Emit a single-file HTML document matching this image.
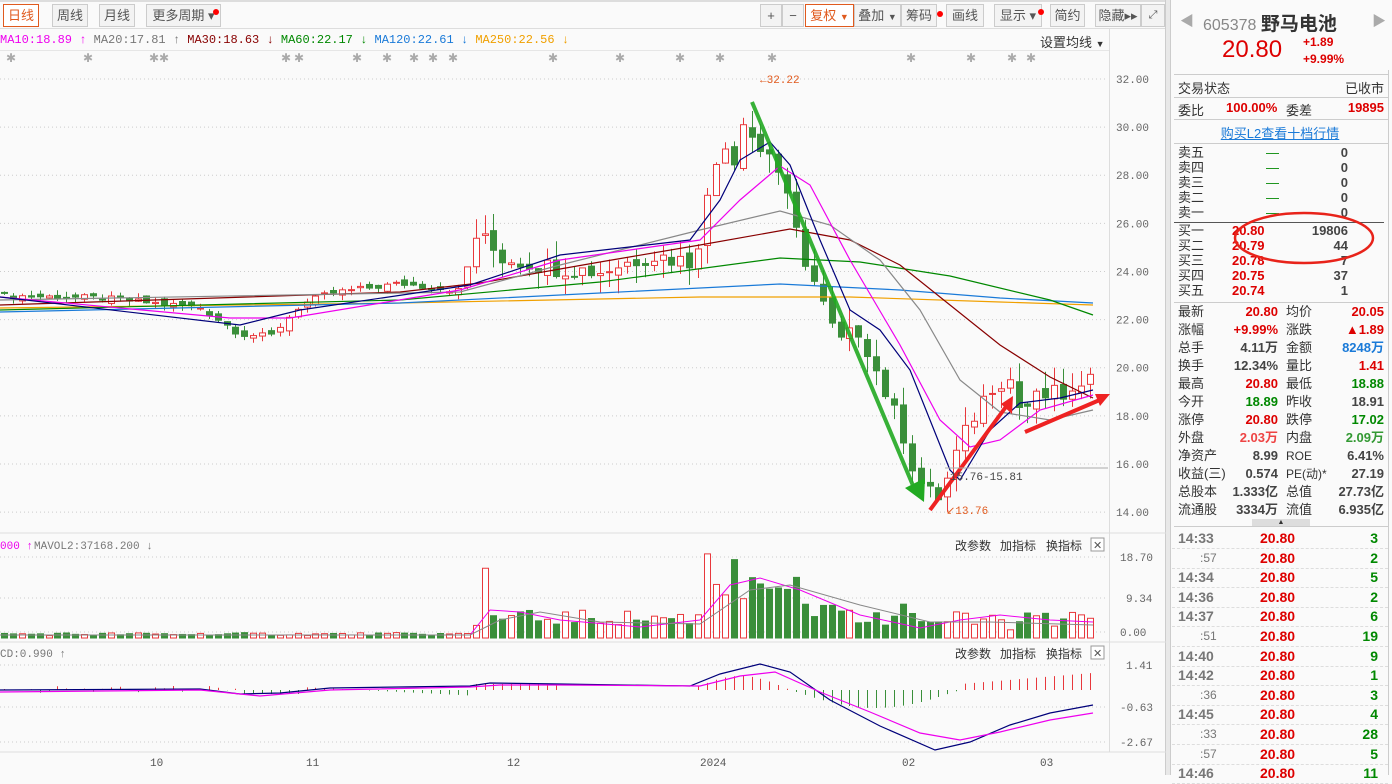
<!DOCTYPE html>
<html><head><meta charset="utf-8">
<style>
*{margin:0;padding:0;box-sizing:border-box}
body{width:1392px;height:775px;overflow:hidden;background:#fafafa;font-family:"Liberation Sans","Noto Sans CJK SC",sans-serif;position:relative;color:#333}
.abs{position:absolute}
.tab{position:absolute;top:4px;height:23px;border:1px solid #ccc;background:#f3f3f3;font-size:13px;color:#555;text-align:center;line-height:21px}
.dot{position:absolute;width:6px;height:6px;border-radius:3px;background:#f00}
.mono{font-family:"Liberation Mono","Noto Sans CJK SC",monospace}
.rp{position:absolute;left:1172px;width:216px;font-size:13px}
.row{position:absolute;left:0;width:216px;height:16px;line-height:16px}
.row span{position:absolute}
.r{color:#d00;font-weight:bold}.g{color:#080;font-weight:bold}.k{color:#444;font-weight:bold}
</style></head><body>
<!-- toolbar -->
<div class="abs" style="left:0;top:0;width:1166px;height:2px;background:#ddd"></div>
<div class="tab" style="left:3px;width:36px;border-color:#e05a1e;color:#e05a1e;background:#fff">日线</div>
<div class="tab" style="left:52px;width:36px">周线</div>
<div class="tab" style="left:99px;width:36px">月线</div>
<div class="tab" style="left:146px;width:75px">更多周期 ▾</div><div class="dot" style="left:213px;top:9px"></div>
<div class="tab" style="left:760px;width:22px">+</div>
<div class="tab" style="left:782px;width:22px">−</div>
<div class="tab" style="left:805px;width:49px;border-color:#e05a1e;color:#e05a1e;background:#fff">复权 <span style="font-size:9px">▼</span></div>
<div class="tab" style="left:854px;width:47px">叠加 <span style="font-size:9px">▼</span></div>
<div class="tab" style="left:901px;width:36px">筹码</div><div class="dot" style="left:937px;top:11px"></div>
<div class="tab" style="left:946px;width:38px">画线</div>
<div class="tab" style="left:994px;width:48px">显示 ▾</div><div class="dot" style="left:1038px;top:9px"></div>
<div class="tab" style="left:1050px;width:35px">简约</div>
<div class="tab" style="left:1095px;width:46px">隐藏▸▸</div>
<div class="tab" style="left:1141px;width:24px;font-size:11px">⤢</div>
<div class="abs" style="left:0;top:28px;width:1166px;height:1px;background:#ddd"></div>
<div class="abs mono" style="left:0;top:33px;font-size:12px;white-space:nowrap">
<span style="color:#e0e">MA10:18.89 ↑</span> <span style="color:#777">MA20:17.81 ↑</span> <span style="color:#800">MA30:18.63 ↓</span> <span style="color:#080">MA60:22.17 ↓</span> <span style="color:#1a7ad8">MA120:22.61 ↓</span> <span style="color:#f0a000">MA250:22.56 ↓</span></div>
<div class="abs" style="left:1040px;top:32px;font-size:13px">设置均线 <span style="font-size:9px">▼</span></div>
<div class="abs" style="left:0;top:50px;width:1110px;height:1px;background:#e6e6e6"></div>
<div class="abs" style="left:1109px;top:29px;width:1px;height:723px;background:#ddd"></div>
<div class="abs" style="left:1165px;top:0;width:6px;height:775px;background:#e8e8e8;border-left:1px solid #ccc;border-right:1px solid #ccc"></div>

<svg class="abs" style="left:0;top:0" width="1166" height="775" id="ch">
<g id="grid" stroke="#ccc" stroke-dasharray="1,3">
</g>
<g font-family="Liberation Mono" font-size="11" fill="#666" id="axis"></g>
<g id="stars" fill="#aaa" font-size="12" font-family="DejaVu Sans"></g>
<g id="candles"></g>
<g fill="none" stroke-width="1.2">
<path stroke="#f0a000" d="M0,308 L400,303 L700,297 L850,297 L1000,302 L1093,305"/>
<path stroke="#1a7ad8" d="M0,312 L400,303 L600,293 L780,284 L900,290 L1000,298 L1093,303"/>
<path stroke="#080" d="M0,310 L400,300 L600,282 L780,258 L860,262 L950,276 L1050,300 L1093,315"/>
<path stroke="#800" d="M0,305 L400,292 L480,283 L600,262 L700,245 L790,229 L850,240 L900,265 L950,305 L1000,345 L1050,377 L1093,398"/>
<path stroke="#888" d="M0,300 L460,292 L560,265 L700,230 L780,211 L830,225 L880,260 L920,310 L960,380 L1000,412 L1050,420 L1093,410"/>
<path stroke="#e0e" d="M0,297 L230,318 L290,318 L460,290 L560,260 L700,240 L740,200 L780,166 L810,185 L850,260 L900,345 L940,420 L970,447 L1000,440 L1040,410 L1093,395"/>
<path stroke="#00007a" d="M0,297 L240,325 L300,310 L470,285 L560,255 L690,240 L720,200 L740,160 L770,142 L790,165 L820,240 L850,310 L880,330 L910,370 L930,420 L950,470 L960,480 L990,430 L1020,403 L1060,398 L1093,390"/>
</g>
<!-- arrows -->
<path d="M752,102 L914,488" stroke="#22aa22" stroke-width="4" opacity=".9"/>
<polygon points="905,488 924,502 925,478" fill="#22aa22"/>
<path d="M930,510 L1008,404" stroke="#ee2222" stroke-width="4"/>
<polygon points="1001,404 1013,396 1012,414" fill="#ee2222"/>
<path d="M1025,432 L1102,399" stroke="#ee2222" stroke-width="4"/>
<polygon points="1095,394 1110,394 1100,406" fill="#ee2222"/>
<text x="760" y="83" fill="#e05a1e" font-family="Liberation Mono" font-size="11">←32.22</text>
<text x="946" y="514" fill="#e05a1e" font-family="Liberation Mono" font-size="11">↙13.76</text>
<line x1="945" y1="468" x2="1108" y2="468" stroke="#aaa"/>
<text x="950" y="480" fill="#444" font-family="Liberation Mono" font-size="11">15.76-15.81</text>
<!-- volume panel -->
<line x1="0" y1="533" x2="1166" y2="533" stroke="#ddd"/>
<text x="0" y="549" font-family="Liberation Mono" font-size="11" fill="#e0e">000 ↑</text>
<text x="34" y="549" font-family="Liberation Mono" font-size="11" fill="#777">MAVOL2:37168.200 ↓</text>
<g id="vol"></g>
<path fill="none" stroke="#e0e" d="M0,635 L470,635 L490,610 L520,612 L560,620 L640,627 L700,620 L730,585 L760,578 L800,590 L860,615 L920,628 L960,620 L1000,615 L1050,620 L1093,622"/>
<path fill="none" stroke="#888" d="M0,635 L470,635 L500,620 L540,612 L600,622 L700,624 L750,590 L790,585 L860,605 L930,622 L990,622 L1093,625"/>
<line x1="0" y1="642" x2="1166" y2="642" stroke="#ddd"/>
<text x="0" y="657" font-family="Liberation Mono" font-size="11" fill="#777">CD:0.990 ↑</text>
<g id="macd"></g>
<path fill="none" stroke="#00007a" stroke-width="1.2" d="M0,690 L200,689 L240,694 L280,693 L330,688 L470,686 L490,683 L560,684 L690,686 L720,674 L760,664 L790,672 L830,700 L880,726 L935,750 L970,742 L1010,725 L1050,713 L1093,705"/>
<path fill="none" stroke="#e0e" stroke-width="1.2" d="M0,692 L200,690 L260,696 L330,690 L470,687 L500,685 L560,685 L700,686 L740,676 L775,672 L820,692 L870,712 L920,733 L960,740 L1000,732 L1050,720 L1093,713"/>
<line x1="0" y1="752" x2="1166" y2="752" stroke="#ddd"/>
<g font-family="Liberation Mono" font-size="11" fill="#555">
<text x="150" y="766">10</text><text x="306" y="766">11</text><text x="507" y="766">12</text><text x="700" y="766">2024</text><text x="902" y="766">02</text><text x="1040" y="766">03</text>
</g>
<g font-size="12" fill="#333">
<text x="955" y="550">改参数</text><text x="1000" y="550">加指标</text><text x="1046" y="550">换指标</text>
<text x="955" y="658">改参数</text><text x="1000" y="658">加指标</text><text x="1046" y="658">换指标</text>
</g>
<rect x="1091" y="538" width="13" height="13" fill="#fff" stroke="#999"/><text x="1093" y="549" font-size="11" fill="#555">✕</text>
<rect x="1091" y="646" width="13" height="13" fill="#fff" stroke="#999"/><text x="1093" y="657" font-size="11" fill="#555">✕</text>
<g font-family="Liberation Mono" font-size="11" fill="#666">
<text x="1120" y="561">18.70</text><text x="1126" y="602">9.34</text><text x="1120" y="636">0.00</text>
<text x="1126" y="669">1.41</text><text x="1120" y="711">-0.63</text><text x="1120" y="746">-2.67</text>
</g>
</svg>

<!-- right panel -->
<div class="abs" style="left:1172px;top:0;width:220px;height:775px;background:#fafafa"></div>
<div class="abs" style="left:1180px;top:11px;color:#aaa;font-size:14px">◀</div>
<div class="abs" style="left:1372px;top:11px;color:#aaa;font-size:14px">▶</div>
<div class="abs" style="left:1203px;top:9px;font-size:16px;color:#888">605378 <b style="color:#333;font-size:19px">野马电池</b></div>
<div class="abs" style="left:1222px;top:36px;font-size:24px;color:#d00">20.80</div>
<div class="abs r" style="left:1303px;top:35px;font-size:12px">+1.89</div>
<div class="abs r" style="left:1303px;top:52px;font-size:12px">+9.99%</div>
<div class="abs" style="left:1174px;top:74px;width:214px;height:1px;background:#ccc"></div>
<div class="rp" style="top:78px"><span style="position:absolute;left:6px">交易状态</span><span style="position:absolute;right:4px">已收市</span></div>
<div class="abs" style="left:1174px;top:97px;width:214px;height:1px;background:#ccc"></div>
<div class="rp" style="top:100px"><span style="position:absolute;left:6px">委比</span><span class="r" style="position:absolute;left:54px">100.00%</span><span style="position:absolute;left:114px">委差</span><span class="r" style="position:absolute;right:4px">19895</span></div>
<div class="abs" style="left:1174px;top:119px;width:214px;height:1px;background:#ccc"></div>
<div class="rp" style="top:123px;text-align:center;color:#1a7ad8;text-decoration:underline">购买L2查看十档行情</div>
<div class="abs" style="left:1174px;top:143px;width:214px;height:1px;background:#ccc"></div>
<div class="rp" style="top:145px;font-size:13px;line-height:15px">
<div class="row" style="top:0"><span style="left:6px">卖五</span><span style="left:94px;color:#080">—</span><span class="k" style="right:40px">0</span></div>
<div class="row" style="top:15px"><span style="left:6px">卖四</span><span style="left:94px;color:#080">—</span><span class="k" style="right:40px">0</span></div>
<div class="row" style="top:30px"><span style="left:6px">卖三</span><span style="left:94px;color:#080">—</span><span class="k" style="right:40px">0</span></div>
<div class="row" style="top:45px"><span style="left:6px">卖二</span><span style="left:94px;color:#080">—</span><span class="k" style="right:40px">0</span></div>
<div class="row" style="top:60px"><span style="left:6px">卖一</span><span style="left:94px;color:#080">—</span><span class="k" style="right:40px">0</span></div>
</div>
<div class="abs" style="left:1174px;top:222px;width:210px;height:1px;background:#555"></div>
<div class="rp" style="top:223px">
<div class="row" style="top:0"><span style="left:6px">买一</span><span class="r" style="left:60px">20.80</span><span class="k" style="right:40px">19806</span></div>
<div class="row" style="top:15px"><span style="left:6px">买二</span><span class="r" style="left:60px">20.79</span><span class="k" style="right:40px">44</span></div>
<div class="row" style="top:30px"><span style="left:6px">买三</span><span class="r" style="left:60px">20.78</span><span class="k" style="right:40px">7</span></div>
<div class="row" style="top:45px"><span style="left:6px">买四</span><span class="r" style="left:60px">20.75</span><span class="k" style="right:40px">37</span></div>
<div class="row" style="top:60px"><span style="left:6px">买五</span><span class="r" style="left:60px">20.74</span><span class="k" style="right:40px">1</span></div>
</div>
<svg class="abs" style="left:1232px;top:210px" width="145" height="56"><ellipse cx="72" cy="28" rx="69" ry="25" fill="none" stroke="#e8231a" stroke-width="2.5"/></svg>
<div class="abs" style="left:1174px;top:302px;width:214px;height:1px;background:#ccc"></div>
<div class="rp" style="top:304px;font-size:13px">
<div class="row" style="top:0"><span style="left:6px">最新</span><span class="r" style="right:110px">20.80</span><span style="left:114px">均价</span><span class="r" style="right:4px">20.05</span></div>
<div class="row" style="top:18px"><span style="left:6px">涨幅</span><span class="r" style="right:110px">+9.99%</span><span style="left:114px">涨跌</span><span class="r" style="right:4px">▲1.89</span></div>
<div class="row" style="top:36px"><span style="left:6px">总手</span><span class="k" style="right:110px">4.11万</span><span style="left:114px">金额</span><span style="right:4px;color:#1a7ad8;font-weight:bold">8248万</span></div>
<div class="row" style="top:54px"><span style="left:6px">换手</span><span class="k" style="right:110px">12.34%</span><span style="left:114px">量比</span><span class="r" style="right:4px">1.41</span></div>
<div class="row" style="top:72px"><span style="left:6px">最高</span><span class="r" style="right:110px">20.80</span><span style="left:114px">最低</span><span class="g" style="right:4px">18.88</span></div>
<div class="row" style="top:90px"><span style="left:6px">今开</span><span class="g" style="right:110px">18.89</span><span style="left:114px">昨收</span><span class="k" style="right:4px">18.91</span></div>
<div class="row" style="top:108px"><span style="left:6px">涨停</span><span class="r" style="right:110px">20.80</span><span style="left:114px">跌停</span><span class="g" style="right:4px">17.02</span></div>
<div class="row" style="top:126px"><span style="left:6px">外盘</span><span style="right:110px;color:#e44;font-weight:bold">2.03万</span><span style="left:114px">内盘</span><span style="right:4px;color:#393;font-weight:bold">2.09万</span></div>
<div class="row" style="top:144px"><span style="left:6px">净资产</span><span class="k" style="right:110px">8.99</span><span style="left:114px;font-size:12px">ROE</span><span class="k" style="right:4px">6.41%</span></div>
<div class="row" style="top:162px"><span style="left:6px">收益(三)</span><span class="k" style="right:110px">0.574</span><span style="left:114px;font-size:12px">PE(动)*</span><span class="k" style="right:4px">27.19</span></div>
<div class="row" style="top:180px"><span style="left:6px">总股本</span><span class="k" style="right:110px">1.333亿</span><span style="left:114px">总值</span><span class="k" style="right:4px">27.73亿</span></div>
<div class="row" style="top:198px"><span style="left:6px">流通股</span><span class="k" style="right:110px">3334万</span><span style="left:114px">流值</span><span class="k" style="right:4px">6.935亿</span></div>
</div>
<div class="abs" style="left:1252px;top:519px;width:58px;height:7px;background:#ddd;font-size:7px;text-align:center;line-height:7px;color:#333">▲</div>
<div class="abs" style="left:1174px;top:526px;width:214px;height:1px;background:#ccc"></div>
<div class="abs" style="left:1388px;top:70px;width:1px;height:705px;background:#ccc"></div>
<div class="rp" id="ticks" style="top:528px;font-weight:bold;font-size:14px"></div>

<script>
var ch=document.getElementById('ch');
function Y(p){return 79+(32-p)*24.06}
var ns='http://www.w3.org/2000/svg';
function el(g,t,a,txt){var e=document.createElementNS(ns,t);for(var k in a)e.setAttribute(k,a[k]);if(txt)e.textContent=txt;document.getElementById(g).appendChild(e);return e}
var gp=[32,30,28,26,24,22,20,18,16,14];
gp.forEach(function(p){el('grid','line',{x1:0,x2:1108,y1:Y(p),y2:Y(p)});el('axis','text',{x:1116,y:Y(p)+4},p.toFixed(2))});
[557,598,632,665,707,742].forEach(function(y){el('grid','line',{x1:0,x2:1108,y1:y,y2:y})});
[10,87,153,163,285,298,356,386,413,432,452,552,619,679,771,719,910,970,1011,1030].forEach(function(x){el('stars','text',{x:x-4,y:62},'✱')});
var kp=[[0,23],[100,22.9],[200,22.5],[240,21.4],[270,21.3],[300,22.6],[330,23.1],[400,23.5],[460,23.2],[476,25.5],[487,25.2],[500,24.6],[550,24.2],[600,24],[650,24.7],[690,24.4],[700,25.5],[712,28],[724,29.5],[735,28.5],[745,31],[755,29],[770,29],[780,28],[790,26.5],[800,25],[810,24],[828,22],[838,21],[860,21.6],[875,20],[890,18.5],[905,17],[915,15.5],[928,14.8],[938,14.6],[948,15.4],[958,16.6],[968,17.5],[980,18.5],[995,19.5],[1010,19.5],[1020,18.2],[1040,18.8],[1060,18.9],[1075,18.8],[1085,18.9],[1093,20.8]];
function P(x){for(var i=1;i<kp.length;i++){if(x<=kp[i][0]){var a=kp[i-1],b=kp[i];return a[1]+(b[1]-a[1])*(x-a[0])/(b[0]-a[0])}}return 20.8}
var s=7,prev=P(0),i=0;
function rnd(n){var v=Math.sin(n*12.9898)*43758.5453;return v-Math.floor(v)}
var vols=[];
for(var x=4;x<=1093;x+=8.9){i++;
 var c=P(x)+(rnd(i)-0.5)*0.5*(x>470?1.6:0.5);
 if(x>1090)c=20.8;
 var o=prev+(rnd(i+100)-0.5)*0.3;
 if(x>1090)o=18.89;
 var up=c>=o;
 var hi=Math.max(o,c)+rnd(i+200)*0.4*(x>470?2:0.6),lo=Math.min(o,c)-rnd(i+300)*0.4*(x>470?2:0.6);
 var col=up?'#e8383c':'#3a8f3a';
 var xx=Math.round(x)+0.5;
 el('candles','line',{x1:xx,x2:xx,y1:Y(hi),y2:Y(lo),stroke:col});
 var t=Y(Math.max(o,c)),h=Math.max(1,Y(Math.min(o,c))-t);
 el('candles','rect',{x:xx-3,y:t,width:6,height:h,fill:up?'#fff':col,stroke:col});
 var v=x<470?(1.5+rnd(i+400)*2):(x<700?(8+rnd(i+500)*10):(x<800?(20+rnd(i+600)*35):(x<920?(8+rnd(i+700)*14):(5+rnd(i+800)*12))));
 if(Math.abs(x-487)<5)v=45;
 var vy=638-v*1.55;
 el('vol','rect',{x:xx-3,y:vy,width:6,height:638-vy,fill:up?'#fff':col,stroke:col});
 prev=c;
}
// macd histogram
for(var x=4;x<=1093;x+=8.9){
 var d=0;
 if(x>300&&x<470)d=-3+ (x-300)/20;
 if(x>470&&x<560)d=-6;
 if(x>690&&x<790)d=-14*Math.sin((x-690)/100*Math.PI);
 if(x>790&&x<960)d=18*Math.sin((x-790)/170*Math.PI);
 if(x>960)d=-6-(x-960)/12;
 if(x<260&&x>0)d=(rnd(x)-0.5)*8;
 if(x>240&&x<300)d=4;
 var xx=Math.round(x)+0.5;
 el('macd','line',{x1:xx,x2:xx,y1:690,y2:690+d,stroke:d<0?'#e8383c':'#3a8f3a'});
}
var tk=[["14:33",3],[":57",2],["14:34",5],["14:36",2],["14:37",6],[":51",19],["14:40",9],["14:42",1],[":36",3],["14:45",4],[":33",28],[":57",5],["14:46",11]];
var h='';tk.forEach(function(t,j){var y=j*19.6;var sub=t[0][0]==':';
h+='<div class="row" style="top:'+(y+2)+'px;height:19px;border-bottom:1px dashed #ddd"><span style="left:'+(sub?28:6)+'px;color:#777;font-weight:'+(sub?'normal':'bold')+';font-size:'+(sub?12:14)+'px">'+t[0]+'</span><span style="left:88px;color:#d00">20.80</span><span style="right:10px;color:#080">'+t[1]+'</span></div>'});
document.getElementById('ticks').innerHTML=h;
</script>
</body></html>
